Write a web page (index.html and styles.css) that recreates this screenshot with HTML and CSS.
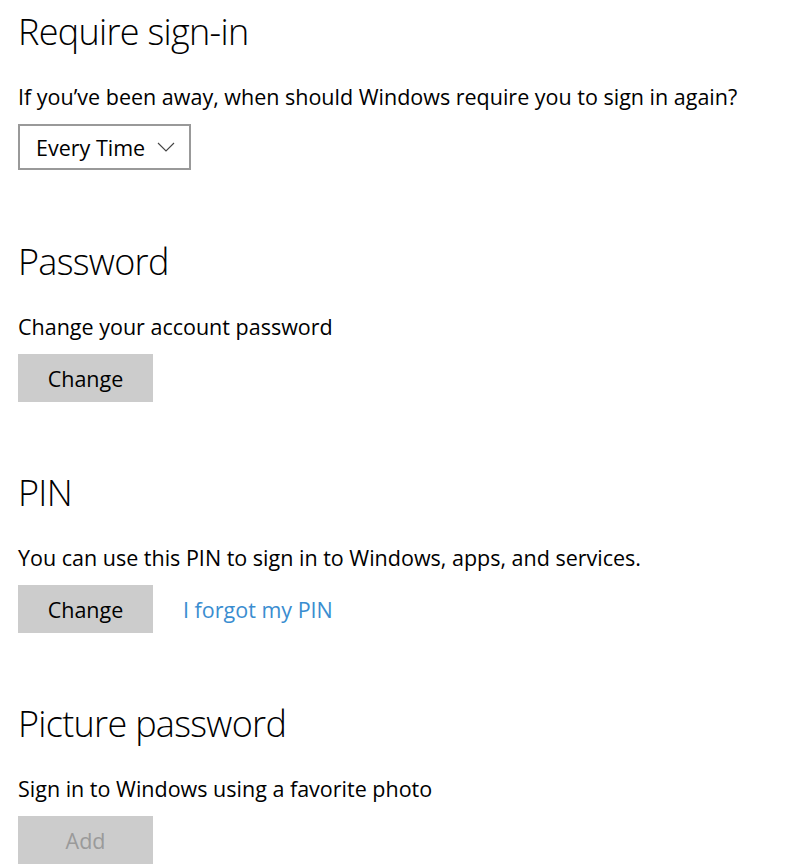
FILE: index.html
```html
<!DOCTYPE html>
<html lang="en">
<head>
<meta charset="utf-8">
<title>Sign-in options</title>
<link rel="stylesheet" href="styles.css">
</head>
<body>
<main class="page">
  <section class="section first">
    <h2 class="heading">Require sign-in</h2>
    <p class="desc">If you’ve been away, when should Windows require you to sign in again?</p>
    <div class="dropdown">
      <span class="dropdown-label">Every Time</span>
      <svg class="chevron" width="18" height="10" viewBox="0 0 18 10"><path d="M1 1 L9 9 L17 1" fill="none" stroke="#444" stroke-width="1.1"/></svg>
    </div>
  </section>
  <section class="section">
    <h2 class="heading">Password</h2>
    <p class="desc">Change your account password</p>
    <div class="actions">
      <button class="btn">Change</button>
    </div>
  </section>
  <section class="section">
    <h2 class="heading">PIN</h2>
    <p class="desc">You can use this PIN to sign in to Windows, apps, and services.</p>
    <div class="actions">
      <button class="btn">Change</button>
      <a class="link" href="#">I forgot my PIN</a>
    </div>
  </section>
  <section class="section">
    <h2 class="heading">Picture password</h2>
    <p class="desc">Sign in to Windows using a favorite photo</p>
    <div class="actions">
      <button class="btn disabled">Add</button>
    </div>
  </section>
</main>
</body>
</html>
```
FILE: styles.css
```css
html, body {
  margin: 0;
  padding: 0;
  background: #fff;
}
body {
  font-family: "Open Sans", "Noto Sans", sans-serif;
  color: #000;
}
.page {
  padding: 8px 18px 0 18px;
  display: flex;
  flex-direction: column;
  gap: 67px;
}
.section {
  display: flex;
  flex-direction: column;
  align-items: flex-start;
}
.section.first {
  padding-bottom: 1px;
}
.heading {
  margin: 0;
  font-size: 36px;
  font-weight: 300;
  line-height: 48px;
  letter-spacing: -0.7px;
}
.desc {
  margin: 27px 0 13px 0;
  font-size: 21.5px;
  line-height: 28px;
  font-weight: 400;
}
.dropdown {
  box-sizing: border-box;
  width: 173px;
  height: 46px;
  border: 2px solid #999;
  display: flex;
  align-items: center;
  padding: 0 14px 0 16px;
  justify-content: space-between;
}
.dropdown-label {
  font-size: 21.5px;
}
.chevron {
  display: block;
}
.actions {
  display: flex;
  align-items: center;
  gap: 30px;
}
.btn {
  width: 135px;
  height: 48px;
  border: none;
  background: #cccccc;
  font-family: inherit;
  font-size: 21.5px;
  color: #000;
  padding: 0;
}
.btn.disabled {
  color: #9a9a9a;
}
.link {
  font-size: 21.5px;
  color: #3a8dd0;
  text-decoration: none;
}
```
